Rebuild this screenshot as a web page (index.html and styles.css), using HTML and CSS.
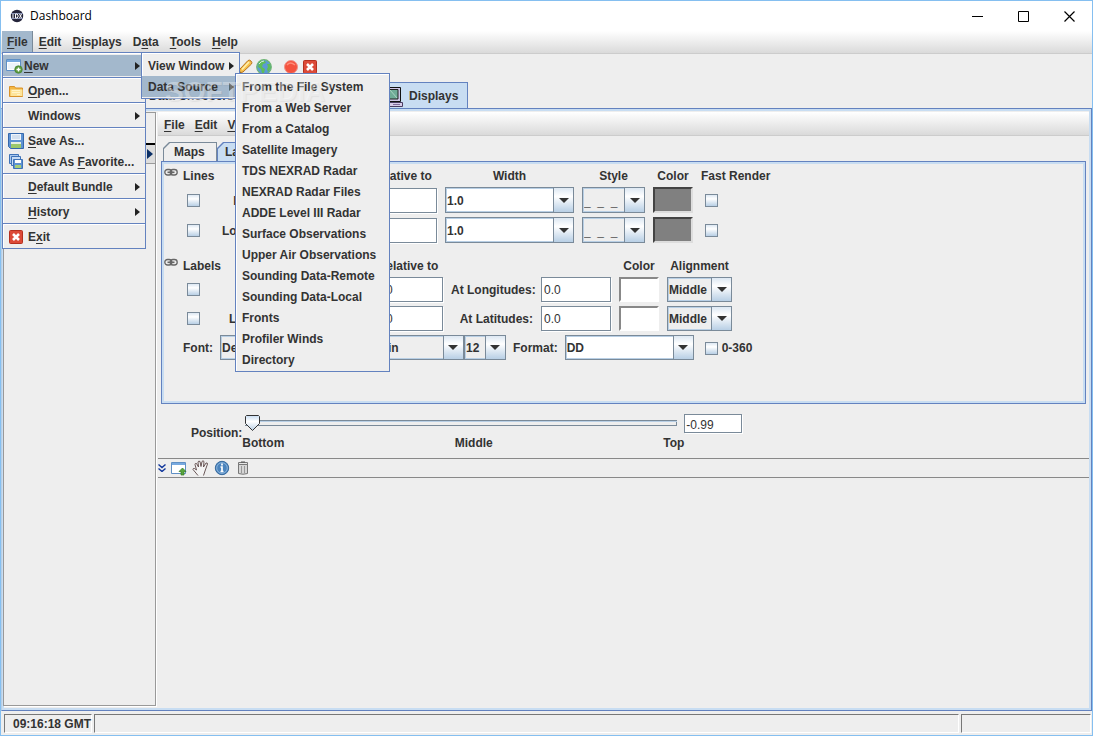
FILE: index.html
```html
<!DOCTYPE html>
<html lang="en">
<head>
<meta charset="utf-8">
<title>Dashboard</title>
<link rel="stylesheet" href="styles.css">
</head>
<body>
<div class="window">
  <header class="titlebar">
    <svg class="app-icon" viewBox="0 0 14 14" width="14" height="14"><circle cx="7" cy="7" r="6.2" fill="#24243a"/><path d="M1 4.500h12M1 9.500h12" stroke="#8a93b5"/><path d="M3 5v4M5.500 5v4M5.500 5h1.500l1 1v2l-1 1h-1.500M9.500 5l2 4M11.500 5l-2 4" stroke="#fff" stroke-width="1" fill="none"/></svg>
    <span class="titlebar-text">Dashboard</span>
    <div class="window-buttons">
      <button aria-label="Minimize"><svg width="11" height="11" viewBox="0 0 11 11"><path d="M0 5.500h11" stroke="#000"/></svg></button>
      <button aria-label="Maximize"><svg width="11" height="11" viewBox="0 0 11 11"><path d="M.5.5h10v10H.5z" stroke="#000" fill="none"/></svg></button>
      <button aria-label="Close"><svg width="11" height="11" viewBox="0 0 11 11"><path d="M.5.5l10 10M10.500.5l-10 10" stroke="#000" stroke-width="1.200"/></svg></button>
    </div>
  </header>

  <nav class="menubar">
    <div class="menu-root">
      <button class="menu-title open"><u>F</u>ile</button>
      <div class="menu menu-file">
        <div class="menu-root">
          <button class="menu-item item-new open">
            <svg width="17" height="16" viewBox="0 0 17 16"><path d="M.5 1.500h14v11H.5z" fill="#fff" stroke="#5f8fc4"/><path d="M1 2h13v2H1z" fill="#77a9df"/><path d="M2 5h11v6H2z" fill="#eef4fa"/><circle cx="12.500" cy="11.500" r="3.800" fill="#5a9a3c" stroke="#3c7a28" stroke-width=".6"/><path d="M10.500 11.500h4M12.500 9.500v4" stroke="#fff" stroke-width="1.400"/></svg>
            <span><u>N</u>ew</span><i class="arrow"></i>
          </button>
          <div class="menu menu-new">
            <button class="menu-item"><span>View Window</span><i class="arrow"></i></button>
            <div class="menu-root">
              <button class="menu-item open"><span>Data Source</span><i class="arrow"></i></button>
              <div class="menu menu-source">
                <button class="menu-item">From the File System</button>
                <button class="menu-item">From a Web Server</button>
                <button class="menu-item">From a Catalog</button>
                <button class="menu-item">Satellite Imagery</button>
                <button class="menu-item">TDS NEXRAD Radar</button>
                <button class="menu-item">NEXRAD Radar Files</button>
                <button class="menu-item">ADDE Level III Radar</button>
                <button class="menu-item">Surface Observations</button>
                <button class="menu-item">Upper Air Observations</button>
                <button class="menu-item">Sounding Data-Remote</button>
                <button class="menu-item">Sounding Data-Local</button>
                <button class="menu-item">Fronts</button>
                <button class="menu-item">Profiler Winds</button>
                <button class="menu-item">Directory</button>
              </div>
            </div>
          </div>
        </div>
        <hr>
        <button class="menu-item with-icon">
          <svg width="16" height="16" viewBox="0 0 16 16"><path d="M1.500 3.500h5l1 1.500h7v8.500h-13z" fill="#f3b743" stroke="#d9932a"/><path d="M2.500 6.500h12v6.500h-12z" fill="#fde49a"/><path d="M4 7.500h8M4 9.500h8M9 11.500h3" stroke="#fff3c8"/></svg>
          <span><u>O</u>pen...</span>
        </button>
        <hr>
        <button class="menu-item no-icon"><span>Windows</span><i class="arrow"></i></button>
        <hr>
        <button class="menu-item with-icon">
          <svg width="16" height="16" viewBox="0 0 16 16"><path d="M.5.5h15v15H2.500l-2-2z" fill="#5d92d2" stroke="#3568ad"/><path d="M3 1h10v6H3z" fill="#eef4fb"/><path d="M4 3h8M4 5h8" stroke="#b9cce2"/><path d="M3 9h10v6H3z" fill="#e6efe0"/><path d="M3 11h10v4H3z" fill="#9bc86b"/></svg>
          <span><u>S</u>ave As...</span>
        </button>
        <button class="menu-item with-icon">
          <svg width="16" height="16" viewBox="0 0 16 16"><g stroke="#3f73b7"><path d="M1.500.5h9v9h-9z" fill="#a9c8ee"/><path d="M3.500 2.500h9v9h-9z" fill="#c8dcf4"/><path d="M5.500 5.500h9v9h-9z" fill="#5d92d2"/></g><path d="M7 6h6v3H7z" fill="#fff"/><path d="M7 11h6v3H7z" fill="#a6cf78"/></svg>
          <span>Save As <u>F</u>avorite...</span>
        </button>
        <hr>
        <button class="menu-item no-icon"><span><u>D</u>efault Bundle</span><i class="arrow"></i></button>
        <hr>
        <button class="menu-item no-icon"><span><u>H</u>istory</span><i class="arrow"></i></button>
        <hr>
        <button class="menu-item with-icon">
          <svg width="16" height="16" viewBox="0 0 16 16"><rect x="1.500" y="1.500" width="13" height="13" rx="1" fill="#dc4a38" stroke="#b5301f"/><path d="M5 5l6 6M11 5l-6 6" stroke="#fff" stroke-width="2.600"/></svg>
          <span>E<u>x</u>it</span>
        </button>
      </div>
    </div>
    <button class="menu-title"><u>E</u>dit</button>
    <button class="menu-title"><u>D</u>isplays</button>
    <button class="menu-title">D<u>a</u>ta</button>
    <button class="menu-title"><u>T</u>ools</button>
    <button class="menu-title"><u>H</u>elp</button>
    <div class="watermark" aria-hidden="true">SOFTPEDIA<sup>®</sup></div>
  </nav>

  <div class="toolbar">
    <button class="tool-first" aria-label="Edit"><svg width="16" height="16" viewBox="0 0 16 16"><path d="M2 14l1-4 8-8.500q1.500-1 3 .5t.5 3L6 13z" fill="#f8c04c" stroke="#b87420"/><path d="M5 10.500l7-7.500" stroke="#fff0ae" stroke-width="1.600"/><path d="M2 14l.7-2 1.300 1.300z" fill="#553"/></svg></button>
    <button aria-label="Web"><svg width="16" height="16" viewBox="0 0 16 16"><circle cx="8" cy="8" r="7.300" fill="#5b9ad6" stroke="#6fb573" stroke-width="1.200"/><path d="M3 3q3-2 6-1l1 2-3 1-1 3 3 2-1 4-2 0-1-4-3-2zM11 5l3 0 1 4-3 4-1-3 1-2z" fill="#5fbd5a"/><path d="M3 5q2-3 5-3" stroke="#d7efe0" fill="none"/></svg></button>
    <button class="tool-record" aria-label="Record"><svg width="16" height="16" viewBox="0 0 16 16"><circle cx="8" cy="8" r="6.500" fill="#f4523e" stroke="#ef9287"/><path d="M4 6q3-4 8 0" stroke="#ff8b78" stroke-width="1.500" fill="none"/></svg></button>
    <button aria-label="Close all"><svg width="16" height="16" viewBox="0 0 16 16"><rect x="1.500" y="1.500" width="13" height="13" rx="1" fill="#dc4a38" stroke="#b5301f"/><path d="M5 5l6 6M11 5l-6 6" stroke="#fff" stroke-width="2.600"/></svg></button>
  </div>

  <div class="main-tabs">
    <button class="main-tab">Data Choosers</button>
    <button class="main-tab">Field Selector</button>
    <button class="main-tab selected">
      <svg width="20" height="22" viewBox="0 0 20 22"><path d="M3 1.500h13.500v14H3z" fill="#cfc7e6" stroke="#111"/><path d="M5 3.500h9v9.500H5z" fill="#6fac97" stroke="#222"/><path d="M6 4l7 8" stroke="#a9d4c2"/><path d="M1 16.500h17.500v4H1z" fill="#d8cdea" stroke="#4b3d62"/><path d="M9 18.500h7" stroke="#806d9c"/></svg>
      Displays
    </button>
  </div>

  <main class="content">
    <aside class="side-pane">
      <button class="expander" aria-label="Expand"><svg width="6" height="10" viewBox="0 0 6 10"><path d="M0 0l6 5-6 5z" fill="#0b2f66"/></svg></button>
    </aside>
    <section class="display-pane">
      <nav class="inner-menubar">
        <button class="menu-title"><u>F</u>ile</button>
        <button class="menu-title"><u>E</u>dit</button>
        <button class="menu-title"><u>V</u>iew</button>
      </nav>

      <div class="sub-tabs">
        <button class="sub-tab">Maps</button>
        <button class="sub-tab selected">Lat/Lon</button>
      </div>
      <form class="sub-panel">
        <div class="grid grid-lines">
          <svg class="link" width="14" height="9" viewBox="0 0 14 9"><g fill="none" stroke="#666"><rect x=".8" y="1.500" width="7" height="5.500" rx="2.700" stroke-width="1.300"/><rect x="6.200" y="1.500" width="7" height="5.500" rx="2.700" stroke-width="1.300"/><path d="M3.500 4.300h7" stroke-width="1.600"/></g></svg>
          <span>Lines</span><span></span>
          <span class="head">Interval</span><span class="head">Relative to</span><span class="head">Width</span><span class="head">Style</span><span class="head">Color</span><span>Fast Render</span>

          <input class="check col2" type="checkbox" id="lat-line">
          <label class="right" for="lat-line">Latitude:</label>
          <input class="field" aria-label="Interval"><input class="field" aria-label="Relative to">
          <span class="combo white tall"><select aria-label="Width"><option>1.0</option></select></span>
          <span class="combo tall dashes"><select aria-label="Style"><option>_&nbsp;&nbsp;_&nbsp;&nbsp;_</option></select></span>
          <button type="button" class="swatch gray" aria-label="Line color"></button>
          <input class="check" type="checkbox" aria-label="Fast render">

          <input class="check col2" type="checkbox" id="lon-line">
          <label class="right" for="lon-line">Longitude:</label>
          <input class="field" aria-label="Interval"><input class="field" aria-label="Relative to">
          <span class="combo white tall"><select aria-label="Width"><option>1.0</option></select></span>
          <span class="combo tall dashes"><select aria-label="Style"><option>_&nbsp;&nbsp;_&nbsp;&nbsp;_</option></select></span>
          <button type="button" class="swatch gray" aria-label="Line color"></button>
          <input class="check" type="checkbox" aria-label="Fast render">
        </div>

        <div class="grid grid-labels">
          <svg class="link" width="14" height="9" viewBox="0 0 14 9"><g fill="none" stroke="#666"><rect x=".8" y="1.500" width="7" height="5.500" rx="2.700" stroke-width="1.300"/><rect x="6.200" y="1.500" width="7" height="5.500" rx="2.700" stroke-width="1.300"/><path d="M3.500 4.300h7" stroke-width="1.600"/></g></svg>
          <span>Labels</span><span></span>
          <span class="head">Interval</span><span class="head">Relative to</span><span></span><span></span><span class="head">Color</span><span class="head">Alignment</span>

          <input class="check col2" type="checkbox" id="lat-label">
          <label class="right" for="lat-label">Latitude:</label>
          <input class="field" aria-label="Interval"><input class="field" aria-label="Relative to" value="0.0">
          <label class="right" for="at-lon">At Longitudes:</label><input class="field" id="at-lon" value="0.0">
          <button type="button" class="swatch" aria-label="Label color"></button>
          <span class="combo"><select aria-label="Alignment"><option>Middle</option></select></span>

          <input class="check col2" type="checkbox" id="lon-label">
          <label class="right" for="lon-label">Longitude:</label>
          <input class="field" aria-label="Interval"><input class="field" aria-label="Relative to" value="0.0">
          <label class="right" for="at-lat">At Latitudes:</label><input class="field" id="at-lat" value="0.0">
          <button type="button" class="swatch" aria-label="Label color"></button>
          <span class="combo"><select aria-label="Alignment"><option>Middle</option></select></span>
        </div>

        <div class="font-row">
          <label for="font">Font:</label>
          <div class="font-combos">
            <span class="combo font-name"><select id="font"><option>Default</option></select></span>
            <span class="combo font-style"><select aria-label="Font style"><option>Plain</option></select></span>
            <span class="combo font-size"><select aria-label="Font size"><option>12</option></select></span>
          </div>
          <label for="format">Format:</label>
          <span class="combo white format"><select id="format"><option>DD</option></select></span>
          <label class="range-check"><input class="check" type="checkbox">0-360</label>
        </div>
      </form>

      <div class="position-row">
        <label for="position">Position:</label>
        <div class="slider">
          <input type="range" id="position" min="0" max="100" value="0">
          <div class="slider-labels"><span>Bottom</span><span>Middle</span><span>Top</span></div>
        </div>
        <input class="field position-value" aria-label="Position value" value="-0.99">
      </div>

      <div class="view-tools">
        <button aria-label="Collapse"><svg width="8" height="8" viewBox="0 0 8 8"><path d="M.5.5L4 3.500 7.500.5M.5 4.500L4 7.500l3.500-3" stroke="#12389c" stroke-width="1.400" fill="none"/></svg></button>
        <button aria-label="New view"><svg width="16" height="15" viewBox="0 0 16 15"><path d="M.5 1.500h14v11H.5z" fill="#fff" stroke="#5f8fc4"/><path d="M1 2h13v2H1z" fill="#77a9df"/><path d="M11.500 7l3.500 3.500h-2V14h-3v-3.500H8z" fill="#58a53c" stroke="#347a22" stroke-width=".7"/></svg></button>
        <button aria-label="Pan"><svg width="17" height="16" viewBox="0 0 17 16"><path d="M6 15.500L1 9.500q0-1.500 1.500-1L4.500 10 3 4.500q0-1.500 1.500-1L6.500 7 6 2q.5-1.500 2-.5l1 5 1-5q1-1.500 2 0l-.5 5.500 2.500-4q1.500-.5 1.500 1L13 11l-1.500 4.500" fill="#f4f4f4" stroke="#5b4646" stroke-width=".9"/></svg></button>
        <button aria-label="Information"><svg width="16" height="16" viewBox="0 0 16 16"><circle cx="8" cy="8" r="6.700" fill="#4b84bd" stroke="#376a9e"/><circle cx="8" cy="8" r="5.300" fill="none" stroke="#9cc0e2" stroke-width=".8"/><path d="M8 3.500v2M6.500 7H8v4.500M6.500 11.500h3" stroke="#fff" stroke-width="1.700" fill="none"/></svg></button>
        <button class="trash" aria-label="Delete"><svg width="10" height="14" viewBox="0 0 10 14"><path d="M.5 2.500h9v10q-4.500 1.500-9 0z" fill="#d6d6d6" stroke="#777"/><path d="M3.500 5v7M6.500 5v7" stroke="#999"/><path d="M.5 1.500h9v2h-9z" fill="#e6e6e6" stroke="#777"/><path d="M3 1h4" stroke="#555"/></svg></button>
      </div>
      <div class="view-area"></div>
    </section>
  </main>

  <footer class="statusbar">
    <div class="status-cell clock">09:16:18 GMT</div>
    <div class="status-cell message"></div>
    <div class="status-cell progress"></div>
  </footer>
</div>
</body>
</html>
```
FILE: styles.css
```css
* { box-sizing: border-box; }

body {
  margin: 0;
  background: #eee;
  color: #333;
  font: bold 12px/15px "Liberation Sans", Arial, sans-serif;
}

button, input, select {
  margin: 0;
  font: inherit;
  color: inherit;
}

button {
  padding: 0;
  border: 0;
  background: none;
  text-align: left;
  white-space: nowrap;
}

svg { display: block; flex: none; }
u { text-underline-offset: 2px; text-decoration-thickness: 1px; }

.window {
  display: flex;
  flex-direction: column;
  min-height: 100vh;
  border: 1px solid #85bff0;
}

/* Title bar */
.titlebar {
  display: flex;
  align-items: center;
  height: 30px;
  padding-left: 9px;
  background: #fff;
}
.titlebar-text {
  flex: 1;
  padding-left: 6px;
  color: #000;
  font: 12px/16px "Open Sans", "Noto Sans", sans-serif;
}
.window-buttons { display: flex; }
.window-buttons button {
  display: grid;
  place-items: center;
  width: 46px;
  height: 30px;
}

/* Menus */
.menubar, .inner-menubar {
  display: flex;
  height: 23px;
  padding-left: 1px;
  border-bottom: 1px solid #ccc;
  background: linear-gradient(#fff, #dadada);
}
.menubar { position: relative; z-index: 2; gap: 1px; }
.menu-root { position: relative; }
.menu-title { height: 22px; padding: 0 5px; }
.menu-title.open {
  padding-right: 4px;
  border-right: 1px solid #7a8a99;
  background: #a3b8cc;
}
.menu {
  position: absolute;
  padding: 2px 0 1px;
  border: 1px solid #6382bf;
  background: #eee;
  box-shadow: inset 1px 1px #fff;
}
.menu-file { top: 21px; left: 0; width: 144px; }
.menu-new { top: -3px; left: 138px; width: 99px; }
.menu-source { top: -3px; left: 93px; width: 155px; }
.menu-item {
  display: flex;
  align-items: center;
  width: 100%;
  height: 21px;
  padding: 1px 5px 0 6px;
}
.menu-item.open { background: #a3b8cc; }
.menu-item.item-new { padding-left: 3px; gap: 1px; }
.menu-item.with-icon { padding-left: 5px; gap: 4px; }
.menu-item.no-icon { padding-left: 25px; }
.arrow {
  margin-left: auto;
  border: solid transparent;
  border-width: 4px 0 4px 5px;
  border-left-color: #222;
}
.menu hr {
  height: 2px;
  margin: 1px 0;
  border: 0;
  border-top: 1px solid #6382bf;
  background: #fff;
}
.watermark {
  position: absolute;
  top: 44px;
  left: 164px;
  color: rgba(255, 255, 255, .34);
  font-size: 28px;
  line-height: 34px;
  text-shadow: 1px 1px 1px rgba(120, 120, 120, .1);
  pointer-events: none;
}
.watermark sup { font-size: 10px; vertical-align: 12px; line-height: 0; }

/* Tool bar */
.toolbar {
  display: flex;
  align-items: center;
  gap: 3px;
  height: 28px;
  padding: 0 0 2px 236px;
}
.tool-record { margin-left: 8px; }

/* Main tabs */
.main-tabs {
  display: flex;
  height: 26px;
  padding-left: 142px;
}
.main-tab {
  display: flex;
  align-items: center;
  gap: 5px;
  width: 117px;
  padding: 2px 0 0 6px;
  border: 1px solid #7a8a99;
  border-width: 1px 1px 0 0;
}
.main-tab.selected {
  width: auto;
  padding: 2px 9px 0 7px;
  border-color: #6382bf;
  background: #c8ddf2;
}

/* Content panes */
.content {
  display: flex;
  flex: 1;
  border: 1px solid #6382bf;
  border-left-color: #b8cfe5;
  box-shadow: inset 0 0 0 2px #c8ddf2;
  padding: 3px 2px 3px 1px;
}
.side-pane {
  width: 153px;
  margin-bottom: 1px;
  padding-top: 30px;
  border: 1px solid #999;
  box-shadow: 1px 1px #fff;
}
.expander {
  display: flex;
  align-items: center;
  justify-content: flex-end;
  width: 100%;
  height: 21px;
  padding-right: 2px;
  border-top: 2px solid #000;
  border-bottom: 1px solid #999;
  background: #ddd;
}
.display-pane {
  display: flex;
  flex: 1;
  flex-direction: column;
  min-width: 0;
  margin-left: 2px;
}
.inner-menubar { height: 24px; flex: none; }
.inner-menubar .menu-title { height: 23px; padding-top: 3px; }

.sub-tabs {
  display: flex;
  padding: 6px 0 0 5px;
}
.sub-tab {
  position: relative;
  isolation: isolate;
  width: 54px;
  height: 19px;
  padding: 2px 0 0 11px;
  background: #7a8a99;
  clip-path: polygon(6px 0, 100% 0, 100% 100%, 0 100%, 0 6px);
}
.sub-tab::before {
  content: "";
  position: absolute;
  z-index: -1;
  inset: 1px 1px 0;
  background: #eee;
  clip-path: polygon(6px 0, 100% 0, 100% 100%, 0 100%, 0 6px);
}
.sub-tab.selected { width: 65px; padding-left: 8px; background: #6382bf; }
.sub-tab.selected::before { background: #c8ddf2; }

.sub-panel {
  min-height: 243px;
  margin: 0 3px;
  padding: 6px 2px;
  border: 1px solid #6382bf;
  box-shadow: inset 0 0 0 2px #c8ddf2;
}
.grid {
  display: grid;
  gap: 4px 8px;
  align-items: center;
  white-space: nowrap;
}
.grid > span:not(.combo), .grid > label { padding-top: 2px; }
.grid-lines {
  grid-template-rows: 15px;
  grid-template-columns: 11px 31px 62px 66px 71px 129px 63px 40px auto;
}
.grid-labels {
  grid-template-rows: 15px;
  grid-template-columns: 11px 31px 69px 66px 70px 82px 70px 40px 65px;
  margin-top: 15px;
  justify-content: start;
}
.link { align-self: start; }
.head { justify-self: center; }
.right { text-align: right; }
.col2 { grid-column: 2; }

.check {
  appearance: none;
  width: 13px;
  height: 13px;
  margin-left: 4px;
  border: 1px solid #7a8a99;
  background: linear-gradient(#dde8f3, #fff 35%, #b8cfe5);
}
.field {
  width: 100%;
  height: 25px;
  padding: 1px 1px 0 2px;
  border: 1px solid #7a8a99;
  background: #fff;
  box-shadow: 1px 1px #fff;
  font-weight: normal;
}
.combo {
  position: relative;
  display: block;
  height: 25px;
}
.combo.tall { height: 26px; }
.combo select {
  appearance: none;
  display: block;
  width: 100%;
  height: 100%;
  padding: 2px 20px 0 1px;
  border: 1px solid #7a8a99;
  border-radius: 0;
  background: #eee;
  box-shadow: inset 0 0 0 1px #b8cfe5;
}
.combo.white select { background: #fff; }
.combo.dashes select { padding-top: 5px; color: #000; }
.combo::after {
  content: "";
  position: absolute;
  top: 1px;
  right: 1px;
  bottom: 1px;
  width: 19px;
  border-left: 1px solid #7a8a99;
  background:
    url("data:image/svg+xml,%3Csvg xmlns='http://www.w3.org/2000/svg' width='10' height='5'%3E%3Cpath d='M0 0h10L5 5z' fill='%23333'/%3E%3C/svg%3E") center no-repeat,
    linear-gradient(#dde8f3, #fff 35%, #b8cfe5);
  pointer-events: none;
}
.swatch {
  width: 40px;
  height: 26px;
  border: 2px solid;
  border-color: #888 #fff #fff #888;
  background: #fff;
}
.grid-labels .swatch { height: 25px; }
.swatch.gray {
  border-color: #444 #ddd #ddd #444;
  background: #808080;
}

.font-row {
  display: flex;
  align-items: center;
  gap: 7px;
  margin-top: 4px;
  padding-left: 19px;
}
.font-row > label { padding-top: 1px; }
.font-combos { display: flex; }
.font-name { width: 148px; }
.font-style { width: 96px; }
.font-size { width: 42px; }
.format { width: 129px; }
.range-check { display: flex; align-items: center; gap: 4px; }

/* Position slider */
.position-row {
  display: flex;
  align-items: flex-start;
  height: 54px;
  padding: 10px 0 0 33px;
}
.position-row > label { padding-top: 12px; }
.slider { width: 442px; padding-top: 1px; }
.slider input {
  appearance: none;
  display: block;
  width: 432px;
  height: 17px;
  margin-left: 3px;
  background: linear-gradient(#7a8a99, #7a8a99) 0 5px / 100% 1px no-repeat,
    linear-gradient(#b8cfe5, #b8cfe5) 0 6px / 100% 1px no-repeat,
    linear-gradient(#7a8a99, #7a8a99) 0 10px / 100% 1px no-repeat,
    linear-gradient(#7a8a99, #7a8a99) 100% 6px / 1px 4px no-repeat;
}
.slider input::-webkit-slider-thumb {
  appearance: none;
  width: 15px;
  height: 17px;
  background: url("data:image/svg+xml,%3Csvg xmlns='http://www.w3.org/2000/svg' width='15' height='17'%3E%3Cdefs%3E%3ClinearGradient id='g' x2='0' y2='1'%3E%3Cstop stop-color='%23c8ddf2'/%3E%3Cstop offset='.4' stop-color='%23fff'/%3E%3Cstop offset='1' stop-color='%23b8cfe5'/%3E%3C/linearGradient%3E%3C/defs%3E%3Cpath d='M1.5.5h12l1 1v7l-7 7-7-7v-7z' fill='url(%23g)' stroke='%23333'/%3E%3C/svg%3E") no-repeat;
}
.slider-labels {
  display: flex;
  justify-content: space-between;
  padding-top: 4px;
}
.position-value { width: 58px; height: 19px; padding: 3px 1px 0; }

/* View tool bar */
.view-tools {
  display: flex;
  align-items: center;
  gap: 5px;
  height: 20px;
  border: solid #888;
  border-width: 1px 0;
}
.trash { margin-left: 3px; }
.view-area { flex: 1; }

/* Status bar */
.statusbar {
  display: flex;
  gap: 2px;
  height: 24px;
  padding: 3px 1px 2px 3px;
}
.status-cell {
  border: 1px solid;
  border-color: #777 #fff #fff #777;
}
.clock { width: 88px; padding: 2px 0 0 8px; white-space: nowrap; }
.message { flex: 1; }
.progress { width: 130px; }
```
